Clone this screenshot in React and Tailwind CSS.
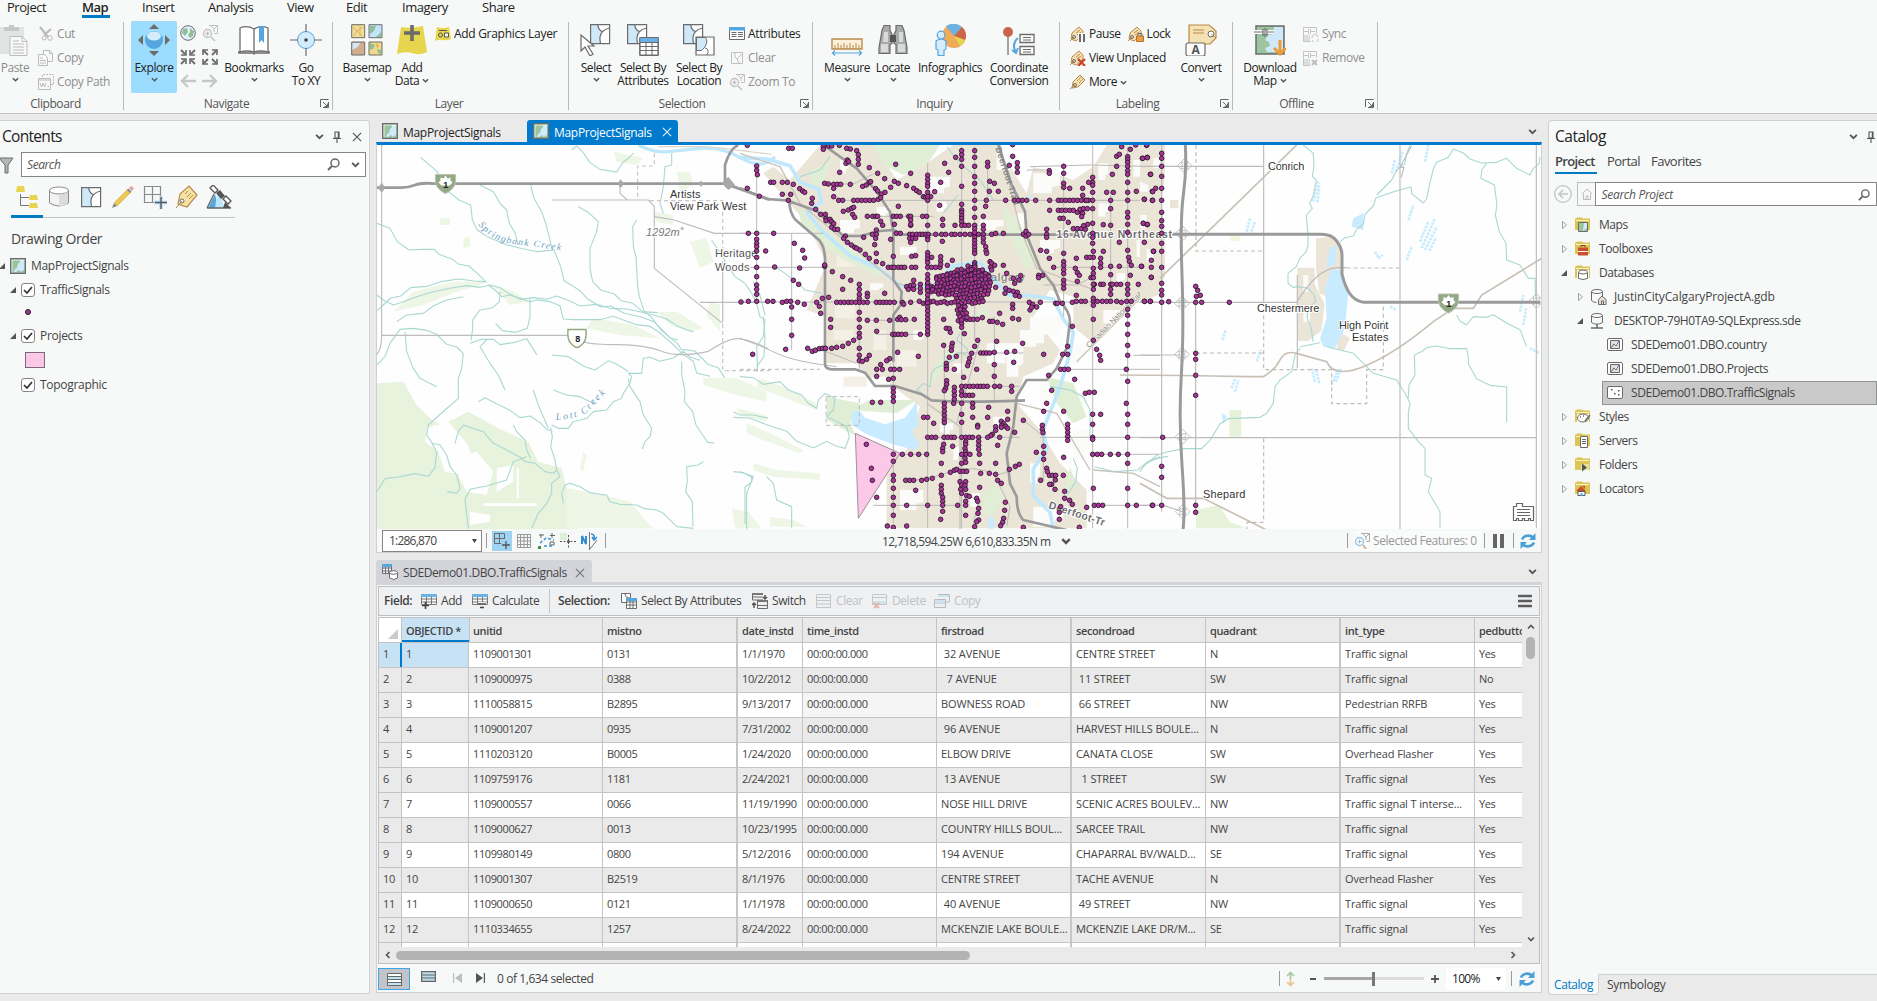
import React from "react";

const G = "#6b6b6b";

/* ---------- small building blocks ---------- */
function Svg({ w = 16, h = w, vb, className = "", children }) {
  return (
    <svg width={w} height={h} viewBox={vb || `0 0 ${w} ${h}`} fill="none" className={"block shrink-0 " + className}>
      {children}
    </svg>
  );
}
const Chev = ({ s = 7, c = "#555", r = "", w = 1.6 }) => (
  <Svg w={s} h={s} vb="0 0 8 8" className={r}>
    <path d="M1 2.5l3 3 3-3" stroke={c} strokeWidth={w} />
  </Svg>
);
const XIcon = ({ s = 11, c = "#555" }) => (
  <Svg w={s} vb="0 0 11 11"><path d="M1 1l9 9M10 1l-9 9" stroke={c} strokeWidth="1.3" /></Svg>
);
const Pin = () => (
  <Svg w={8} h={12}><path d="M2 1h4v6H2zM0 7.5h8M4 8v4M5.3 1v6" stroke="#555" strokeWidth="1.1" /></Svg>
);
const Mag = ({ s = 13 }) => (
  <Svg w={s} vb="0 0 13 13"><circle cx="8" cy="5" r="4" stroke="#666" strokeWidth="1.5" /><path d="M5 8L1 12" stroke="#666" strokeWidth="2" /></Svg>
);
const Launcher = () => (
  <Svg w={9}><path d="M.5 8V.5H8.500M8.500 3v5.500H3M3 3l4.500 4.500M7.500 4.500v3h-3" stroke="#666" /></Svg>
);
const MapIcon = () => (
  <Svg w={16}><path fill="#9bc49f" d="M1 1h14v14H1z" /><path fill="#cfeafc" d="M10 2h4v10l-2 1-1 1-2-2-3 2H4l1-3 2-1 1-4 2-2z" /><path fill="#fff" d="M1.500 1.500h13v1h-12v12h-1z" opacity=".7" /><path stroke={G} strokeWidth="1.200" d="M.6.6h14.800v14.800H.6z" /></Svg>
);
const Refresh = ({ s = 16 }) => (
  <Svg w={s} vb="0 0 16 16"><path d="M2 6.500C4 2 10 1.500 13 4.500M14 9.500C12 14 6 14.500 3 11.500" stroke="#4a9fd8" strokeWidth="2.600" /><path d="M15.500 0v7H9zM.5 16V9H7z" fill="#4a9fd8" /></Svg>
);

/* ---------- ribbon icons ---------- */
const icons = {
  paste: (
    <Svg w={32}><path fill="#e2e4e4" d="M1 3h24v27H1z" /><path fill="#c6c8c8" d="M5 3h5V1h5v2h5v4H5z" /><path fill="#f7f9f8" stroke="#bbb" d="M11 12.500h12l5 5v14H11z" /><path stroke="#bbb" d="M23 12.500v5h5M14 17h6M14 20h11M14 23h11M14 26h11M14 29h11" /></Svg>
  ),
  cut: <Svg><path d="M2 1l8 10M13 3L6 9" stroke="#bbb" strokeWidth="2.200" /><circle cx="6" cy="12" r="2" stroke="#bbb" /><circle cx="12" cy="12" r="2.300" stroke="#bbb" /></Svg>,
  copy: <Svg><path d="M5.500.5h6l3 3v8h-9z M11.500.5v3h3" stroke="#bbb" /><path fill="#f7f9f8" stroke="#bbb" d="M.5 4.500h6l3 3v8h-9z" /><path stroke="#bbb" d="M2 8h3M2 10.500h6M2 13h6" /></Svg>,
  path: <Svg><path d="M4.500 3V.5h11v10H13" stroke="#bbb" strokeDasharray="2 1" /><path d="M.5 4.500h12v11H.5zM.5 6h12" stroke="#bbb" /><path d="M2 9l1.500 4L5 9l1.500 4L8 9M9.500 12.500h1.500" stroke="#bbb" /></Svg>,
  explore: (
    <Svg w={32}><path fill={G} d="M16 0l5 5H11zM16 32l5-5H11zM0 16l5-5v10zM32 16l-5-5v10z" /><circle cx="16" cy="16" r="9" fill="#55a6dc" /><ellipse cx="16" cy="12" rx="7" ry="4.500" fill="#d4ecfb" /></Svg>
  ),
  globe: <Svg><circle cx="8" cy="8" r="7.300" fill="#e3f3fd" stroke={G} /><path fill="#8fbf94" d="M3 4l4-1 1 4-3 4-3-3zM10 3l4 3-1 5-3 2-2-3 2-3z" /></Svg>,
  zoomsel: <Svg><path d="M7 .5h8.500v8H12M9 1l3 3 3-3M12 4v3" stroke="#c0c0c0" /><circle cx="5.500" cy="8.500" r="4" stroke="#c0c0c0" strokeWidth="1.300" /><path d="M9 12l4 4M3.500 8.500h4M5.500 6.500v4" stroke="#c0c0c0" strokeWidth="1.500" /></Svg>,
  inn: <Svg><path d="M1 1l4 4M15 1l-4 4M1 15l4-4M15 15l-4-4" stroke={G} strokeWidth="1.800" /><path d="M6 1v5H1M10 1v5h5M6 15v-5H1M10 15v-5h5" stroke={G} strokeWidth="1.600" /></Svg>,
  out: <Svg><path d="M1 1l5 5M15 1l-5 5M1 15l5-5M15 15l-5-5" stroke={G} strokeWidth="1.800" /><path d="M1 6V1h5M15 6V1h-5M1 10v5h5M15 10v5h-5" stroke={G} strokeWidth="1.600" /></Svg>,
  left: <Svg><path d="M16 8H2M8 2L2 8l6 6" stroke="#c6c8c8" strokeWidth="2.300" /></Svg>,
  right: <Svg><path d="M0 8h14M8 2l6 6-6 6" stroke="#c6c8c8" strokeWidth="2.300" /></Svg>,
  book: (
    <Svg w={32}><path fill="#fff" stroke={G} strokeWidth="1.300" d="M2 28V4q7-3 14 1 7-4 14-1v24q-7-2-14 0-7-2-14 0zM16 5v23" /><path d="M1 27v2h14l1 1 1-1h14v-2" stroke={G} strokeWidth="1.500" /><path fill="#55a6dc" d="M21 2h5v17l-2.500-3-2.500 3z" /></Svg>
  ),
  goto: <Svg w={32}><circle cx="16" cy="16" r="8.500" fill="#d4ecfb" stroke="#55a6dc" /><path d="M16 0v8M16 24v8M0 16h8M24 16h8" stroke={G} strokeWidth="1.200" /><circle cx="16" cy="16" r="1.800" fill="#444" /></Svg>,
  basemap: (
    <Svg w={32}>
      <path fill="#f0dd98" stroke={G} d="M.7.7h13v13H.7z" /><path stroke="#dba45e" strokeWidth=".8" d="M2 3l4 4 6-4M3 12l3-5 5 5M9 2v10" />
      <path fill="#bfe4fb" stroke={G} d="M18 .7h13v13H18z" /><path fill="#8fbf94" d="M19 2h6l-2 5-4 3zM30 8v5h-5z" />
      <path fill="#d3ad8b" stroke={G} d="M.7 18h13v13H.7z" /><path fill="#cfe9fa" d="M1.500 19h8l-3 4-5 3z" />
      <path fill="#f2d98a" stroke={G} d="M18 18h13v13H18z" /><path fill="#8fbf94" d="M19 19l5 2-2 4-3 1zM26 25l4 1v4l-3-1z" /><path fill="#e8a04e" d="M25 19l3 3-2 2z" />
    </Svg>
  ),
  add: <Svg w={32}><path fill="#e7d54e" d="M5 3q10 2 22-1l4 26q-8 4-15 1-8-2-15 1z" /><path d="M16 1v16M8 9h16" stroke={G} strokeWidth="3.600" /></Svg>,
  gfx: <Svg><path fill="#e7d54e" d="M2 1q6 2 12 0l2 12q-4 2-8 1-4-1-8 1z" /><path stroke="#555" d="M4 4.500h8" /><circle cx="5.500" cy="9" r="2" stroke="#555" /><path stroke="#555" fill="#fff" d="M9.500 7h4v4h-4z" /></Svg>,
  select: <Svg w={32}><Poly x={10} y={0} /><path fill="#fff" stroke={G} strokeWidth="1.200" d="M1 11v16l4-4 5 9 3-2-5-8h6z" /></Svg>,
  sba: <Svg w={32}><Poly x={0} y={0} /><path fill="#fff" stroke={G} d="M13 14h18v17H13z" /><path fill="#6bb2e4" d="M13 13.500h18V18H13z" /><path stroke={G} d="M13 18.500h18M13 22.500h18M13 26.500h18M19 18v13M25 18v13M12.700 13.500h18.600v18H12.700z" /></Svg>,
  sbl: <Svg w={32}><Poly x={0} y={0} /><path fill="#fff" stroke={G} strokeWidth="1.200" d="M13 13h18v18H13z" /><path fill="#cfe9fa" stroke={G} d="M13.500 13.500h9q3 4-1 10l-3 3h-5z" /><path stroke={G} d="M22 24q5 1 2 7" /></Svg>,
  attrs: <Svg><path fill="#fff" stroke={G} d="M.5 1.500h15v12H.5z" /><path fill="#55a6dc" d="M0 1h16v3.500H0z" /><path stroke={G} d="M2.500 6.500h5M2.500 8.500h5M2.500 10.500h5M9 6.500h5M9 8.500h5M9 10.500h5" /></Svg>,
  clear: <Svg><path stroke="#c0c0c0" d="M2.500 2.500h11v11h-11zM6 3q-1 5 2 6l2 4M8 9l5-5" /></Svg>,
  measure: <Svg w={32}><path fill="#fbf0d9" stroke="#b98a4a" strokeWidth="1.400" d="M1 15h30v10H1z" /><path d="M4 25v-4M7 25v-6M10 25v-4M13 25v-6M16 25v-4M19 25v-6M22 25v-4M25 25v-6M28 25v-4" stroke="#b98a4a" /><path d="M2 29h28M4 26.500L1.500 29 4 31.500M28 26.500L30.500 29 28 31.500" stroke="#55a6dc" strokeWidth="1.200" /></Svg>,
  locate: <Svg w={32}><path fill="#a9abab" stroke={G} strokeWidth="1.200" d="M7 1.500h6v5l2 4v9l-2 1v9H2v-6l3-17zM25 1.500h-6v5l-2 4v9l2 1v9h11v-6L27 6.500z" /><path fill="#d9dada" d="M4 20h7v8H4zM21 20h7v8h-7zM7 8h4v10H6zM22 8h4v10h-4z" /><path fill="#555" d="M13 11h6v7h-6z" /></Svg>,
  info: <Svg w={32}><circle cx="20" cy="12" r="12" fill="#efaa5a" /><path fill="#6bb2e4" d="M20 12L12 2q8-5 16 1z" /><path fill="#c9654a" d="M20 12l8-9q6 6 3 13z" /><path fill="#e7d54e" d="M20 12l11 4q-2 5-5 6z" /><g fill="#d4ecfb" stroke="#55a6dc" strokeWidth="1.200"><path d="M2 17q5-4 10 0v8l-2 1v5.500H4V26l-2-1z" /><circle cx="7" cy="11" r="3.800" /></g></Svg>,
  coord: <Svg w={32}><circle cx="5" cy="8" r="5" fill="#c9654a" /><path d="M5 12v19" stroke={G} strokeWidth="1.200" /><path d="M15 14q-7 6-2 14M9 26l4 3 2-5" stroke="#55a6dc" strokeWidth="2" /><path fill="#fff" stroke={G} strokeWidth="1.300" d="M17 10.500h14v8H17zM17 22.500h14v8H17z" /><path stroke={G} d="M20 13.500h8M20 16h8M20 25.500h8M20 28h8" /></Svg>,
  tag: <Tag />,
  pause: <Svg><TagP /><path fill="#f7f9f8" d="M8 7h8v9H8z" /><path stroke={G} strokeWidth="2" d="M10 8v8M14 8v8" /></Svg>,
  lock: <Svg><TagP /><path fill="#e9a04a" stroke="#b9722a" d="M8.500 10h7v5.500h-7z" /><path stroke={G} d="M10 10V7.500h4V10" /></Svg>,
  unpl: <Svg><TagP /><path stroke="#c9452a" strokeWidth="2.300" d="M8 9l7 7M15 9l-7 7" /></Svg>,
  convert: <Svg w={32}><path fill="#f5e2b4" stroke="#b98a4a" strokeWidth="1.200" d="M4 1h20l7 6v7l-6 6H4z" /><circle cx="26" cy="10" r="3" stroke={G} fill="#fff" /><path stroke="#b98a4a" d="M8 6h11M8 9h11M26 10l5 4" /><rect x="1" y="19" width="19" height="13" rx="2" fill="#fff" stroke={G} strokeWidth="1.200" /><text x="10.500" y="30" fontSize="12" fontWeight="700" fontFamily="Open Sans, sans-serif" textAnchor="middle" fill="#555">A</text></Svg>,
  download: <Svg w={32}><path fill="#9bc49f" stroke={G} strokeWidth="1.500" d="M2 2h28v28H2z" /><path fill="#cfe9fa" d="M20 3h9v22l-4 3H13l-2-4 5-2-1-4-4-2 3-5 6-1z" /><path stroke="#fff" strokeWidth="4" d="M0 8h20" /><path stroke={G} strokeWidth="1.200" d="M0 8h9M14 8h6M9 5v7M11 4v9M13 5v7" /><path stroke="#eb9c3c" strokeWidth="3" d="M26 16v14M20 24l6 6 6-6" /></Svg>,
  sync: <Svg><path stroke="#c4c4c4" d="M.5 1.500h13v6M.5 1.500v14h7M1 5.500h4M8 5.500h4M5.500 3v5M7.500 3v5M9 12a3 3 0 016-1M15 13a3 3 0 01-6 1" /><path fill="#dedede" d="M1 9h6v6H1z" /></Svg>,
  remove: <Svg><path stroke="#c4c4c4" d="M.5 1.500h13v6M.5 1.500v14h7M1 5.500h4M8 5.500h4M5.500 3v5M7.500 3v5" /><path fill="#dedede" d="M1 9h6v6H1z" /><path stroke="#bdbdbd" strokeWidth="2" d="M9 10l5 5M14 10l-5 5" /></Svg>,
};
function Poly({ x, y }) {
  return (
    <g transform={`translate(${x} ${y})`}>
      <path fill="#fff" d="M.6.6h19v19H.6z" />
      <path fill="#cfe9fa" d="M.6.6h7q1 5 5 7-4 4-2 12h-10z" />
      <path stroke={G} strokeWidth="1.200" d="M.6.6h19v19H.6zM7.600.6q1 6 5 7-4 4-2 12M12.600 7.600Q15 5 19.600 4" />
    </g>
  );
}
function TagP() {
  return <><path fill="#f5e2b4" stroke="#b98a4a" d="M1 13l1-6 7-6 4 4v4l-7 6z" /><circle cx="4" cy="11" r="1.500" stroke={G} /><path stroke="#b98a4a" d="M6 7l4-3M7 9l4-3M0 15l4-4" /></>;
}
function Tag() {
  return <Svg><g><path fill="#f5e2b4" stroke="#b98a4a" d="M2 14l1-6 7-7 5 5-7 7z" /><circle cx="5" cy="11" r="1.500" stroke={G} /><path stroke="#b98a4a" d="M7 7l4-4M9 9l4-4M0 15l5-4" /></g></Svg>;
}

function Big({ cls, icon, a, b, chev, gray, bg = "" }) {
  return (
    <div className={"flex h-[72px] shrink-0 flex-col items-center whitespace-nowrap pt-[3px] " + cls + " " + bg + (gray ? " text-[#8b8b8b]" : "")}>
      {icons[icon]}
      <div className="mt-[5px] leading-[13px]">{a}</div>
      {b ? (
        <div className="flex items-center gap-[3px] leading-[13px]">{b}{chev && <Chev />}</div>
      ) : chev ? (
        <div className="flex h-[11px] items-center"><Chev /></div>
      ) : null}
    </div>
  );
}
function Small({ icon, t, gray, chev }) {
  return (
    <div className={"flex h-6 items-center gap-[3px] whitespace-nowrap " + (gray ? "text-[#8f8f8f]" : "")}>
      {icons[icon]}<span>{t}</span>{chev && <Chev />}
    </div>
  );
}
function Group({ cls, label, shift = "", launch, children }) {
  return (
    <div className={"flex h-[88px] shrink-0 flex-col border-r border-[#b9bbbb] " + cls}>
      <div className="-mt-px flex h-[77px]">{children}</div>
      <div className="flex items-center justify-between text-[#555]">
        <span className="w-[9px]" />
        <span className={"pt-px leading-[13px] " + shift}>{label}</span>
        <span className="mr-[3px] w-[9px]">{launch && <Launcher />}</span>
      </div>
    </div>
  );
}

function Ribbon() {
  return (
    <div className="h-[114px] shrink-0 border-b border-[#c3c5c5] bg-[#f7f9f8]">
      <div className="flex h-[22px] pl-[7px] text-[13px] leading-[14px] tracking-[-0.035em]">
        <span className="w-[76px]">Project</span>
        <span className="w-[59px] font-semibold"><span className="-ml-px block h-[18px] w-[28px] border-b-[3px] border-[#007ac2]">Map</span></span>
        <span className="w-[66px]">Insert</span>
        <span className="w-[79px]">Analysis</span>
        <span className="w-[59px]">View</span>
        <span className="w-[56px]">Edit</span>
        <span className="w-[80px]">Imagery</span>
        <span>Share</span>
      </div>
      <div className="flex">
        <Group cls="w-[124px]" label="Clipboard" shift="-ml-[9px]">
          <Big cls="w-[30px]" icon="paste" a="Paste" chev gray />
          <div className="ml-2 mt-px"><Small icon="cut" t="Cut" gray /><Small icon="copy" t="Copy" gray /><Small icon="path" t="Copy Path" gray /></div>
        </Group>
        <Group cls="w-[209px]" label="Navigate" launch>
          <Big cls="ml-[7px] w-[46px]" icon="explore" a="Explore" chev bg="rounded-[2px] bg-[#9bdcff]" />
          <div className="ml-[3px] mt-[4px] grid h-[64px] grid-cols-2 content-between gap-x-[6px]">
            {icons.globe}{icons.zoomsel}{icons.inn}{icons.out}{icons.left}{icons.right}
          </div>
          <Big cls="ml-[6px] w-[60px]" icon="book" a="Bookmarks" chev />
          <Big cls="ml-[2px] w-[40px]" icon="goto" a="Go" b="To XY" />
        </Group>
        <Group cls="w-[236px]" label="Layer">
          <Big cls="ml-[9px] w-[50px]" icon="basemap" a="Basemap" chev />
          <Big cls="ml-[3px] w-[34px]" icon="add" a="Add" b="Data" chev />
          <div className="ml-[6px] mt-px tracking-[-0.025em]"><Small icon="gfx" t="Add Graphics Layer" /></div>
        </Group>
        <Group cls="w-[244px]" label="Selection" shift="-ml-[14px]" launch>
          <Big cls="ml-[10px] w-[34px]" icon="select" a="Select" chev />
          <Big cls="ml-[3px] w-[54px]" icon="sba" a="Select By" b="Attributes" />
          <Big cls="ml-[4px] w-[50px]" icon="sbl" a="Select By" b="Location" />
          <div className="ml-[5px] mt-px tracking-[-0.025em]"><Small icon="attrs" t="Attributes" /><Small icon="clear" t="Clear" gray /><Small icon="zoomsel" t="Zoom To" gray /></div>
        </Group>
        <Group cls="w-[247px]" label="Inquiry">
          <Big cls="ml-[14px] w-[40px]" icon="measure" a="Measure" chev />
          <Big cls="ml-[9px] w-[34px]" icon="locate" a="Locate" chev />
          <Big cls="ml-[6px] w-[68px]" icon="info" a="Infographics" chev />
          <Big cls="ml-[5px] w-[60px]" icon="coord" a="Coordinate" b="Conversion" />
        </Group>
        <Group cls="w-[173px]" label="Labeling" launch shift="-ml-[14px]">
          <div className="ml-[10px] mt-px w-[109px] shrink-0">
            <div className="flex gap-[7px]"><Small icon="pause" t="Pause" /><Small icon="lock" t="Lock" /></div>
            <Small icon="unpl" t="View Unplaced" /><Small icon="tag" t="More" chev />
          </div>
          <Big cls="w-[44px]" icon="convert" a="Convert" chev />
        </Group>
        <Group cls="w-[145px]" label="Offline" shift="-ml-[14px]" launch>
          <Big cls="ml-[9px] w-[56px]" icon="download" a="Download" b="Map" chev />
          <div className="ml-[5px] mt-px"><Small icon="sync" t="Sync" gray /><Small icon="remove" t="Remove" gray /></div>
        </Group>
      </div>
    </div>
  );
}

/* ---------- contents pane ---------- */
const Exp = () => <Svg w={6}><path d="M6 0v6H0z" fill="#555" /></Svg>;
const Check = () => (
  <span className="flex size-[14px] items-center justify-center rounded-[3px] border border-[#858585] bg-white">
    <Svg w={10} h={8}><path d="M1 4l3 3 5-6" stroke="#333" strokeWidth="1.700" /></Svg>
  </span>
);
function Contents() {
  return (
    <div className="flex h-[874px] w-[370px] shrink-0 flex-col rounded-tr-[4px] border-r border-t border-b border-[#cfd1d1] bg-[#f7f9f8]">
      <div className="flex h-[31px] items-center pl-[2px] text-[15.5px] tracking-[-0.045em] text-[#222]">
        <span className="flex-1">Contents</span>
        <div className="flex items-center pr-[7px]"><Chev s={9} /><span className="ml-[9px]"><Pin /></span><span className="ml-[11px]"><XIcon s={10} /></span></div>
      </div>
      <div className="flex items-center">
        <Svg w={14} h={18}><path fill="#b5b7b7" stroke={G} d="M-1 2h14L8 9v8H5V9z" /></Svg>
        <div className="ml-[7px] flex h-[25px] w-[345px] items-center border border-[#868686] bg-white pl-[5px] pr-[5px] italic text-[#555]">
          <span className="flex-1">Search</span><Mag /><span className="ml-[11px]"><Chev s={9} /></span>
        </div>
      </div>
      <div className="ml-[11px] mt-[2px] flex h-[39px] w-[224px] items-center border-b border-[#c4c6c6]">
        <div className="mt-px flex h-[38px] w-[32px] items-center justify-center border-b-[3px] border-[#007ac2]">
          <Svg w={24}><path fill="#e7d54e" d="M2 1h7l1 6H1zM15 10h7l1 5h-9zM15 18h7l1 5h-9z" /><path d="M5.500 9v11.500H14M5.500 12.500H14" stroke="#777" /></Svg>
        </div>
        <Svg w={24} className="-mt-[2px] ml-[4px]"><path fill="#f1f2f2" stroke="#8a8a8a" d="M2.500 5v13q9.500 6 19 0V5" /><ellipse cx="12" cy="5.500" rx="9.500" ry="3.500" fill="#fff" stroke="#8a8a8a" /><path fill="#dcdcdc" d="M12 9.500q6 0 9-3v11q-3 4-9 4z" /></Svg>
        <Svg w={22} className="-mt-[2px] ml-[9px]"><Poly x={1} y={1} /></Svg>
        <Svg w={24} className="-mt-[2px] ml-[8px]"><path fill="#ecc94f" stroke="#c9a43c" strokeWidth=".6" d="M4 18L18 4l3 3L7 21z" /><path fill="#888" d="M4 18l3 3-5 2zM17 5l3 3 1.500-1.500-3-3z" /><path fill="#e9a09a" d="M19 3l2-2 3 2-2 3z" /></Svg>
        <Svg w={24} className="-mt-[2px] ml-[9px]"><path stroke="#8a8a8a" strokeWidth="1.200" d="M1.500 1.500h16v16h-16zM9.500 1.500v16M1.500 9.500h16" /><path stroke="#bfe4fb" strokeWidth="4" d="M18 11v13M11 17.500h13" /><path stroke="#555" strokeWidth="1.400" d="M18 12v12M12 17.500h12" /></Svg>
        <Svg w={24} className="-mt-[2px] ml-[8px]"><path fill="#f5e2a4" stroke="#b98a4a" strokeWidth="1.200" d="M3 19l2-10 9-8 8 9-10 12z" /><circle cx="7" cy="16" r="2" fill="#fff" stroke={G} /><path stroke="#b98a4a" d="M10 9l3-3M12 12l4-4M14 14l4-4M1 23l6-7" /></Svg>
        <Svg w={26} h={24} className="-mt-[2px] ml-[7px]"><path fill="#55a6dc" d="M9 9L2 23h10z" /><path fill="#bfe4fb" d="M11 9h4l3 14h-9z" /><path stroke="#666" strokeWidth="1.300" d="M1 23h24M8 9L1 23" /><path fill="#555" d="M10 8l4-3 5 6-4 3zM19 17l6 6h-8z" /><path stroke="#555" strokeWidth="1.300" fill="#fff" d="M4 3l3-3 5 5-3 3zM17 14l3-3 5 5-3 3z" /></Svg>
      </div>
      <div className="ml-[11px] mt-[10px] h-[24px] text-[14px] leading-[22px] tracking-[-0.03em] text-[#444]">Drawing Order</div>
      <div className="mt-[2px] tracking-[-0.025em] text-[#444]">
        <div className="flex h-6 items-center"><span className="-ml-px mr-[5px]"><Exp /></span><MapIcon /><span className="ml-[5px]">MapProjectSignals</span></div>
        <div className="flex h-6 items-center pl-[10px]"><Exp /><span className="ml-[5px] mr-[5px]"><Check /></span>TrafficSignals</div>
        <div className="flex h-[22px] pl-[25px] pt-[7px]"><span className="size-[6px] rounded-full border border-[#1c1c1c] bg-[#a53294]" /></div>
        <div className="flex h-6 items-center pl-[10px]"><Exp /><span className="ml-[5px] mr-[5px]"><Check /></span>Projects</div>
        <div className="flex h-[25px] pl-[25px] pt-[4px]"><span className="h-[16px] w-[20px] border border-[#7a6a74] bg-[#fcc8e8]" /></div>
        <div className="flex h-6 items-center pl-[21px]"><span className="mr-[5px]"><Check /></span>Topographic</div>
      </div>
    </div>
  );
}

/* ---------- map ---------- */
// Flat x,y lists measured on a canvas three times the map's scale.
const CITY = [
  22,46,146,55,157,55,50,108,50,121,52,134,92,157,101,157,127,157,142,157,160,163,179,176,188,183,194,187,152,193,127,193,145,211,217,205,215,220,227,238,22,175,58,199,
  25,310,50,310,101,310,50,328,50,340,50,350,50,363,50,382,50,412,50,440,50,465,50,478,50,493,50,514,3,516,25,514,83,514,99,514,127,517,140,514,152,514,173,517,193,523,230,517,
  77,363,104,411,163,340,188,361,194,384,179,414,160,451,176,463,155,531,155,568,155,616,137,658,38,673,
  250,50,250,58,266,48,275,48,298,46,320,55,331,57,350,62,355,74,355,88,355,103,322,90,318,100,326,95,388,113,413,130,299,127,434,146,467,103,512,130,475,229,
  254,160,265,162,281,163,292,163,302,163,331,163,368,169,379,165,388,157,392,155,407,176,413,183,424,192,435,187,452,172,463,154,475,160,281,175,281,200,
  296,211,308,211,341,211,353,211,365,211,377,211,389,211,401,211,415,208,422,203,500,167,521,175,530,182,538,187,550,200,557,202,572,200,584,185,602,157,614,100,626,127,647,82,599,226,
  563,136,563,148,563,160,563,169,563,187,563,200,563,211,665,62,665,74,665,88,665,109,665,169,665,223,665,240,665,247,665,257,665,265,665,275,
  704,62,704,82,704,109,704,140,704,160,704,184,704,211,704,235,704,262,743,97,743,109,749,154,763,160,748,184,775,184,739,211,737,229,730,259,
  818,79,808,106,832,98,832,112,832,127,818,44,797,211,823,211,835,211,847,211,860,211,887,211,929,211,955,211,965,211,977,211,989,211,1000,211,1012,211,1024,211,1036,211,1046,211,
  928,122,928,130,971,109,971,130,971,160,971,172,989,175,929,241,955,241,965,241,977,241,989,241,1000,241,1012,247,1024,247,1020,238,1030,236,1042,236,960,265,970,265,985,277,1028,250,1025,260,
  1058,142,1058,157,1058,166,1058,187,1058,211,1058,236,1058,280,1058,310,1058,322,1058,340,1060,364,1060,382,1046,157,1028,175,1028,196,1040,211,1000,296,1012,296,1024,296,1036,298,1043,283,1031,287,
  1100,187,1120,187,1117,133,1130,109,1130,79,1138,73,1145,50,1112,211,1112,236,1090,284,1112,286,1090,364,1138,337,1171,58,1187,45,1220,46,1207,85,1222,82,1231,133,1189,184,1237,184,1213,208,1237,211,1210,280,1222,284,1241,364,
  1163,80,1163,88,1163,97,1163,109,1163,122,1163,133,1163,157,1163,187,1163,211,1163,247,1163,262,1163,283,1163,307,1163,361,1166,382,1168,394,1174,406,1171,436,1163,463,1163,478,1163,493,1163,538,1163,556,1163,583,1163,613,1163,646,1163,676,1159,718,1163,754,1159,820,1163,853,1163,883,1163,922,1163,973,1163,1000,1163,1075,1163,1126,
  1138,409,1112,409,1205,409,1234,442,1195,463,1112,434,1112,463,1117,463,1130,463,1142,463,1063,463,1082,463,1090,463,1112,478,1112,493,1112,514,
  997,517,1009,514,1024,514,1036,514,1060,514,1072,514,1087,514,1100,514,1130,514,1144,517,1160,514,1174,514,1214,514,1231,514,
  469,310,481,310,509,313,518,313,530,313,540,313,548,313,557,313,565,313,587,313,605,313,617,313,635,313,645,313,660,313,675,313,690,313,704,313,716,313,730,313,755,313,767,310,790,310,850,313,858,304,858,318,866,313,920,298,920,313,920,322,
  512,286,563,286,608,286,645,286,665,286,675,286,686,286,382,259,398,259,407,259,413,259,460,259,470,259,481,259,506,259,512,259,512,270,512,283,548,259,560,259,608,268,
  463,283,371,322,452,328,409,300,409,313,407,325,404,344,428,286,422,274,397,313,310,244,325,240,335,235,341,232,338,253,344,262,242,253,256,253,258,265,258,272,270,268,275,275,281,281,275,292,284,298,293,298,
  316,318,311,325,322,337,334,345,344,352,350,355,360,360,376,373,388,385,409,395,428,401,445,412,455,412,463,412,475,412,485,412,494,412,515,412,527,412,563,412,575,412,587,412,600,412,409,370,460,379,515,379,527,377,
  563,322,563,329,563,368,563,378,563,388,563,398,563,434,575,382,602,380,602,392,602,403,607,334,622,406,637,391,509,325,518,325,527,325,512,337,
  704,286,704,296,704,307,704,322,704,332,704,342,704,352,704,362,704,370,730,286,730,298,730,325,730,337,737,350,738,362,740,370,
  254,409,254,405,277,425,308,440,332,451,308,478,358,463,358,478,358,493,358,505,358,517,358,547,358,568,358,592,358,610,358,622,358,655,358,676,358,692,382,490,382,500,382,571,434,490,409,571,449,571,
  290,517,302,517,313,517,325,517,335,517,347,517,370,517,382,517,409,517,420,517,430,517,440,517,450,517,463,517,487,517,491,523,512,517,538,514,266,502,247,505,238,529,242,550,272,568,272,592,410,604,
  458,613,466,613,475,613,485,613,497,613,541,613,563,613,473,568,479,562,484,569,497,569,523,568,203,655,217,664,226,661,238,656,248,655,257,655,275,655,290,652,308,649,325,640,341,631,
  367,694,380,688,388,676,473,667,449,686,440,692,422,704,410,718,427,718,452,718,463,718,479,718,410,739,446,748,460,745,460,775,460,787,460,800,460,814,397,817,422,817,535,679,
  750,395,755,400,764,406,790,406,752,412,755,420,745,435,767,472,704,398,704,405,500,470,512,466,521,451,521,466,505,478,521,478,541,463,541,475,541,487,563,463,563,475,575,470,575,485,
  800,430,820,445,842,437,837,450,824,460,797,475,808,481,820,484,832,487,838,499,795,490,826,496,818,523,818,535,818,565,836,568,868,517,878,523,890,531,901,517,870,540,875,532,947,520,952,520,967,520,896,436,908,436,896,443,
  779,550,611,568,680,568,690,568,700,568,712,568,727,563,749,574,758,574,772,577,788,583,619,595,628,596,631,607,665,580,665,592,673,611,
  611,646,637,640,635,650,634,661,628,682,649,679,713,631,704,649,695,670,689,685,686,697,683,707,722,669,731,669,740,669,749,669,763,667,800,667,824,664,848,640,770,634,821,697,911,673,763,704,763,739,
  619,700,619,710,619,718,620,752,620,763,617,775,613,782,643,718,710,718,671,742,665,769,677,769,689,769,700,769,712,769,722,769,731,769,742,769,764,769,779,769,815,769,815,784,
  643,772,643,784,643,796,643,808,641,820,665,784,665,796,677,796,688,796,698,796,665,820,698,820,698,832,613,820,613,832,613,844,613,856,613,868,613,878,665,853,665,877,698,862,743,862,746,832,713,886,713,891,
  803,844,803,868,850,871,824,907,784,874,791,880,785,886,767,890,767,901,784,892,797,889,803,895,779,922,773,946,757,913,752,917,743,922,551,862,563,862,581,880,
  563,922,575,922,587,922,612,922,623,922,634,922,643,922,665,922,677,922,688,922,698,922,716,922,611,943,608,955,608,965,638,949,604,1000,677,935,677,943,675,955,677,965,677,973,716,934,716,946,716,958,718,973,
  460,973,487,973,512,973,536,973,560,973,665,973,690,973,460,994,665,1000,675,985,677,997,460,1036,460,1051,460,1075,460,1102,460,1126,460,1156,460,1192,442,1188,500,1188,497,1051,509,1051,521,1051,545,1051,560,1048,577,1045,604,1036,527,1081,
  631,1027,643,1021,650,1018,660,1024,670,1024,680,1024,719,1000,767,1000,722,1030,748,1030,767,1033,773,1051,784,1060,808,1018,826,1009,838,1003,604,1066,604,1078,604,1090,608,1102,608,1114,608,1126,608,1144,602,1168,
  660,1055,665,1065,662,1078,665,1090,677,1055,675,1066,677,1078,680,1097,688,1099,710,1105,713,1114,677,1114,677,1126,653,1126,677,1156,716,1135,714,1150,716,1170,710,1175,704,1190,719,1072,796,1117,794,1141,791,1165,788,1177,782,1187,850,1192,563,1126,500,1126,
  926,736,935,781,920,820,911,844,971,844,983,649,968,673,983,673,962,718,973,718,985,718,1004,748,997,589,902,361,920,364,928,385,941,412,971,370,971,395,971,406,971,419,971,431,971,451,971,463,971,475,
  1009,385,1040,382,1050,382,1006,415,1012,428,1018,436,1012,454,1009,496,1060,415,1060,430,1053,443,1060,443,1060,463,1060,478,1060,505,1060,526,1060,568,1060,631,1082,385,1082,400,1082,412,1070,658,1079,676,1082,691,
  1036,790,1048,787,1063,787,1058,853,1082,853,1058,883,1058,922,1058,928,983,883,983,895,983,907,983,919,983,931,907,886,907,898,909,908,911,949,889,967,911,970,911,988,971,982,
  920,1015,922,1025,928,1036,937,1036,947,1036,970,1036,946,1050,935,1063,929,1063,945,1078,974,1084,974,1105,989,1111,997,1123,962,1130,958,1147,958,1168,902,1051,1018,1192,1040,1132,
  1058,973,1072,973,1085,973,1111,973,1135,973,1060,1075,1063,1126,1075,1126,1088,1126,1189,1126,1237,1126,379,943,394,1015,397,1051,410,1102,
];
const EAST = [
  20,90,8,130,22,128,65,115,65,130,65,154,65,184,65,220,65,256,65,292,65,317,65,334,65,355,65,385,65,409,65,457,65,505,65,526,65,540,65,562,86,560,13,559,31,559,
  32,178,47,220,38,230,38,256,13,253,10,325,22,328,13,382,40,409,34,436,34,457,4,454,34,487,68,967,65,1054,65,1087,65,1171,38,1171,
  167,514,173,526,181,541,169,544,167,562,185,562,268,562,167,715,167,733,167,781,167,841,167,1171,167,1192,
];
// Dense downtown blocks: [y, from, to]
const DOWNTOWN = [[411,684,714],[421,650,728],[431,618,740],[438,590,752],[449,588,752],[460,588,752],[471,580,750],[482,576,748],[493,592,745],[505,650,726],[517,548,728],[529,652,672],[540,652,680],[551,654,680],[562,656,680],[573,655,672]];
function dots(list) {
  const o = [];
  for (let i = 0; i < list.length; i += 2) o.push(<circle key={i} cx={list[i]} cy={list[i + 1]} r="6.900" />);
  return o;
}
function downtown() {
  const o = [];
  DOWNTOWN.forEach(([y, a, b], r) => {
    for (let x = a, k = 0; x <= b; x += 9 + ((k * 7 + r * 3) % 4), k++) {
      o.push(<circle key={r + "-" + x} cx={x + (r % 3) * 2} cy={y + ((k * 5 + r * 2) % 7) - 3} r="6.900" />);
    }
  });
  for (let y = 447; y < 612; y += 12) o.push(<circle key={"c" + y} cx="563" cy={y} r="6.900" />);
  return o;
}
function Interchange({ x, y }) {
  return <path d={`M${x - 22} ${y}l22-22 22 22-22 22zM${x - 10} ${y - 10}q10 5 20 0q-5 10 0 20q-10-5-20 0q5-10 0-20z`} stroke="#b8b8b8" strokeWidth="2.500" fill="none" />;
}
const urban =
  "M70 130L100 110 150 150 240 45H400L470 150L560 100L640 45H770L860 190L880 110L1000 150L1060 110L1100 45H1260V440L1180 520L1060 640L1000 590L1000 500L930 480L880 560L960 660L940 700L850 740L830 820L900 900L960 1000L1040 1080L1040 1195H440V1000L500 960L540 830L460 770L380 740L350 700L260 700V560L200 540L260 400L200 280L140 210z";
const westPatches = [[285,525,60,40],[310,740,70,30],[290,350,60,60],[400,600,40,60],[470,660,60,50],[280,600,60,30]];
const white = [[570,140,60,50],[770,70,60,50],[880,130,80,60],[590,215,30,30],[830,250,30,60],[900,330,60,40],[640,700,30,30],[740,640,80,60],[800,640,50,100],[870,560,60,80],[930,560,40,60],[480,1080,70,60],[980,640,60,60],[990,790,50,60],[1000,900,50,90],[900,750,60,60],[395,740,55,40],[720,270,70,30],[880,1130,90,60],[300,270,60,40],[760,860,40,30],[520,600,40,30],[840,600,70,50],[640,950,20,40],[1075,100,30,50],[1180,90,40,50],[1075,220,30,40],[1190,330,40,50],[410,230,40,30],[480,350,50,25],[300,90,25,40],[600,880,40,30],[870,1000,30,60],[390,460,40,20],[1090,540,60,40],[690,1090,30,40],[1130,430,25,30]];
function CalgaryMap() {
  return (
    <Svg w={1164} h={384} vb="377 145 1164 384">
      <path fill="#fefefe" d="M377 145h1164v384H377z" />
      {/* west: forest, creeks, highways */}
      <g transform="translate(370 115) scale(.33333)" strokeLinejoin="round">
        <path fill="#e8f3dd" d="M20 805l80-5 40 70 40 40 30 20-40 10-5 40 40 30 20 60 60 10 20-50-10-40-60-70 60-30 90 50 90 40 30 60 70 20 20 80 50 20-20 80-40 55H20z" />
        <g fill="#eef6e6">
          <path d="M590 1120l110 20 80 20 50 60 20 20H590zM1085 1180l50 10 40 50h-80zM70 590l60-60 120-30 110 0-100 30-100 40zM370 510l60 20 50 30-60 10zM670 610l120 20 80 40-120-10-100-20zM1000 790l100 0 90 40v30l-90-20-100-30zM850 290l60 10v30l-50-10zM960 380l50-10 20 70-40 20zM1100 880l90 20v20l-80-20z" />
          <path d="M730 110l90 20-20 20-60-10zM920 170l40 0 10 40-40 20zM1020 560l30 10v80l-40-50zM640 1010l10 10-10 50-10-10zM210 310l30 0v20h-30zM280 370l20-5v30l-20 5zM860 590l60 0 80 50-40 10-60-20z" />
        </g>
        <g fill="#fefefe"><path d="M240 1030l80-20 50 60-20 70-60-10zM380 1060l50-10v50l-50 30zM190 930l40 5v15l-40 10zM340 1165h160v8h-160zM300 1190l60 10v20l-60 10zM440 1060h7v90h-7z" /></g>
        <g stroke="#a9d8d1" strokeWidth="3.300" fill="none">
          <path d="M152 127l50 43 20 45 20 20 25 20 35 15 5 45 15 30 30 20 60 25 40 10 50 10 50-5 20 50 10 42 20 12 30 20 20 22 40 25 30-3 40 22 50 10 40 15 45 45 25 20 12 18 40 5 40 40 30 10 20 30" />
          <path d="M330 210l40 20 20 35 20 20 8 40 18 30 8 35M482 210l10 40 25 45 10 30 12 45 8 35M20 325l40 15 22 40 35 25 40-2 35 0 15 15 40 15 20 15 30 5 25 22 25 25-35-2-45-6-55 8-40 14-50 4-30 25-30 6-40 38" />
          <path d="M20 540l20 15 30 15 30-10 40-15 50-15 50-10 50-8 40 5 30-7 30 8 30 20 30 15 40-5 40 5 30-10 40 15 30 15 50-5 40 12 50 2 40 8 40 10 40 12 30 20 30 12 20 6" />
          <path d="M355 510l20 15 20 20 25-5 30 10 30 10 20-5 40 5 30 12 10 40 30 2 40 0 40 0 40-10 40 15 30 10 40 5 30 20 40 35 30 30 30 20 10 35 40 10M390 530l-2 30-20 18-40 8-20 30 0 25-5 35M300 685l35-12 35 0 20 16 40-6 40-12 30 48M480 550l0 55-8 35-35 12-40-5-20-22" />
          <path d="M20 750l25-25 15-40 30-42 40-3 40 6 30 12 30 30 30 8 20 20-5 44-10 30 0 60-40 35-50 45-5 30 15 22 15 30-5 45-20 27-40-8-50 10-40 5-25 40M105 650l5 60 20 50 20 30 50 25M350 675l-20 20 30 50 25 35 20 45M80 620l30-20 50-5 30-22 40-18 50-10" />
          <path d="M185 985l25 5 20 30 10 35 20 25 10 40-10 15-28-5M255 985l10-35 15-20 60 20 30 35 40 20 45 25 10 10 30 5 30 25 25 5 10-10-5-30-13-40 5-30-5-28M490 825l15 45 15 35 15 35M325 860l20-12 35 18 40 20 30 22 30-5 30 20 20 20 18 6M470 1025l-40 15-20 55-60 18-50 10-15 30 10 88M430 930l10 20 25 25 5 30 12 25M560 1065l10 20-25 20 0 30-15 30-25 30-20 45" />
          <path d="M545 930l20 10 30 0 15-20 40-10 20-20 40-5 20-25 25-10 5-15 20-30 5-20-10-10 40 0 5-45 20-3 30 12 40-10 30-20 20 17 30 10M545 720l50 5 50 30 30 10 15-10 25-18 20 8 25 15 15 10M775 790l5 25 30 45 10 40 25 40-5 25-15 15-8 22M550 825l40 15 40 5 30 15 20 5M935 740l0 40 10 50-2 30 25 30 10 40 20 30 15 22 20 2M1090 890l20 10 40 0 45 10M580 1165l-5-30 10-25 15-5 30 10 30 18 30 5 20 2 10 20 30 8 50 2 20 10 40 5 20 10 40 40 50 5M1000 1040l-15 10-35 5 2 45-5 30 20 30 2 75M1090 1070l30 3 25 13 0 15-20 15 0 110" />
          <path d="M625 275l30 17 30 28-5 30-20 50 0 60 8 40 25 25 40 12 20 20 35 8 30 25 45 3M800 315l-12 20 2 60 8 30 5 90 5 30 15 45 20 15 30 40 30 25 20 5M605 105l15-12 20 20 20 30 30 20 50 8 20-30 20-15 10-12M905 115l0 35-20 5-5 60-10 50 10 30M1025 375l20 30 30 50 20 30 30 20 20 30 15 30 10 40 15 10-5 50-20 30 2 50 0 25" />
        </g>
        <path d="M805 90q50 25 90 20t100-10 120 30 100-5" stroke="#bfe8fd" strokeWidth="10" fill="none" />
        <path d="M865 95q80 0 120 0t100 8 120 15" stroke="#ddd6cc" strokeWidth="4" fill="none" />
        <g stroke="#bdbdbd" strokeWidth="3.500" fill="none">
          <path d="M35 90v570q0 40-15 60M35 661h560l50 20q20 8 100 8t130 20 140 0q60-40 90-38t90 30M545 255h290l18 20v185l205 165M853 305l60 10 120 40h160M990 562h210M1058 460v160M750 205v30l22 20" />
          <path d="M853 115v38h-50v102M840 257h218v510h142" strokeDasharray="12 9" stroke="#c6c6c6" />
        </g>
        <path d="M20 218h75q20 0 40-8t60-4h870l135 48" stroke="#9a9a9a" strokeWidth="8.500" fill="none" />
        <path d="M1065 200V150q15-50 40-60" stroke="#9a9a9a" strokeWidth="8" fill="none" />
        <g fill="#a8a8a8"><path d="M24 218l11-15 11 15-11 15zM742 206l10-13 10 13-10 13zM986 206l6-9 12 9-12 9zM1055 205l20-20 20 25-20 15z" /></g>
        <path id="sb" d="M325 330q40 50 110 58t150 20" />
        <path id="lc" d="M558 915q80-5 100-30t60-60" />
        <g fill="#6f9fc4" fontFamily="Liberation Serif, serif" fontStyle="italic" fontSize="29" letterSpacing="3.800">
          <text><textPath href="#sb">Springbank Creek</textPath></text>
          <text letterSpacing="6"><textPath href="#lc">Lott Creek</textPath></text>
        </g>
      </g>
      {/* city */}
      <g transform="translate(740 130) scale(.33333)">
        <path d={urban} fill="#ebe5d8" />
        <g fill="#fbfbf9">{white.map(([x, y, w, h]) => <path key={x + "," + y} d={`M${x} ${y}h${w}v${h * 0.6}l-${w * 0.3} ${h * 0.1}v${h * 0.3}h-${w * 0.7}z`} />)}</g>
        <g fill="#f4f0e6">{westPatches.map(([x, y, w, h]) => <path key={x + "," + y} d={`M${x} ${y}h${w}v${h}h-${w}z`} />)}</g>
        <g fill="#e1eed6">
          <path d="M400 45h200l-40 60-70 30-60-30zM175 230l70 60 60 50 130 90-20 10-120-60-110-90zM210 120l60-20-20 60-30 10zM260 800l100 20-30 60 20 40-90-50zM330 840l60-30 140 0-60 40zM590 700l50-60 20 20-70 80-40 50zM780 220l60 60 50 120-30 20-50-100zM920 740l80 20 40 100-40 20-50-60zM990 1010l20 60-40 30zM730 1090l40-30 20 40-30 60-30-10zM700 560l40-40 10 40z" />
        </g>
        <path fill="#eef6e6" d="M60 745l70 25 100 50 0 20-80-30-100-40zM20 880l70 30 100 50-10 10-110-40-50-20zM40 1000l70 20 130 10v20l-140-10-60-20zM90 1160l70 10 40 20H90z" />
        <g stroke="#bfe8fd" strokeWidth="11" fill="none" strokeLinejoin="round">
          <path d="M0 82l80 5 70 20 30 50 55 20 10 40-45 30 50 60 80 70 90 40 60 50 100 0 60-60 80-10 30 40 60 60 60 0 70 10 30 60 30 40-10 60-20 70-20 60-40 100 10 60-40 60 0 80 50 50 10 50 20 100" />
        </g>
        <path fill="#c8ebff" d="M335 850l20-12 20 25 60 20 60-20 35-48 5 70-20 20 25 40-15 15-60-15-80-30-50-30zM745 1165l10-8 10 20-5 20-15-2zM860 200l20-12-10 20z" />
        <g stroke="#a9d8d1" strokeWidth="3.300" fill="none">
          <path d="M620 50l40 50 60 50 40 60M610 250l45-55M180 140l60-20 30-40M0 740l40 3 30 20 50-8 25 25 40 15 20 25 25 15 5-25 20-20 30 15-5 35-20 20 60 30 8 30-12 35-26-6-30-15-40 20-50-20-30-30-60-20-50-20-50-2M560 800l-30-20 20-20 20 10 5-40 10-15 25-10 30-15 20-20 30 10-10-25-30-25 10-20M930 770l60 10 40 20 20 40 0 80M1000 985l12 30-5 40-25 40M1063 1010l60 15 70-5 30-25 37-15M105 410l30 20 40 30 20 20 50 10M70 560l5 60-3 60-22 30M0 1025l40 15-20 50 0 110M80 1040l20 20 10 50 45 20 0 65M40 455l20 40 15 60" />
        </g>
        <g stroke="#c9c2b8" strokeWidth="4" fill="none"><path d="M560 820l100 70 0 310M780 45l60 250 50 120 160 60M1260 445l-250 250M830 820l120 30 100 170M1060 1020l120 10 80 40M0 70l120 40 60 110 120 100 170 140 250 60" /></g>
        <g stroke="#bababa" strokeWidth="3" fill="none">
          <path d="M0 310h250M50 100v420M0 412h250M0 516h1260M155 310v350M358 460v260M460 310v870M563 100v1095M613 640v300M665 50v1145M704 50v580M743 90v120M300 211h580M250 162h90l60-30M380 259h200M410 613h160M390 571h140M660 769h180M560 922h280M650 669h200M763 560v260M860 211h400M971 100v460M1058 45v1150M1163 50v1145M1112 180v340M860 120h70M870 110l180-5 200 5M940 412h320M910 465h100l60-30M1180 676h80M960 718h300M900 922h360M450 973h110M1058 973h200M500 1051q60 0 130-25t140 10l60-20M1058 1126h202M400 1126h260M350 700l-130-50M0 625q60 20 110 45t180 40M850 870l60 50v130M720 630l-70 250M700 1180l15-60-30-30M800 1190l10-60-50-100" />
          <path d="M0 718h240M258 800h100v86h-100z" strokeDasharray="12 9" />
        </g>
        <g stroke="#9a9a9a" strokeWidth="8" fill="none" strokeLinejoin="round">
          <path d="M0 175l50 20 30 12 60 4 90 32 80 75h50l60-15 40-3 30 14h600M148 211q0 40 20 60l70 60q17 20 17 60v310q0 15 20 17h70l30 10 30 40h60l80 25 30 18q100 8 280 0M250 45l100 70 60 70 40 60 10 60v145l25 35-3 40-22 30v140M775 45q20 60 40 120l40 80 5 70 40 100 40 50 20 50q30 30 30 60l-10 80-30 60-30 35-60 0-30 50-10 90-20 80 10 90 20 40q0 50 20 70l130 30" />
        </g>
        <path d="M346 910l134 60-125 195z" fill="#fcc8e8" stroke="#8a8088" strokeWidth="2.500" />
        <g fontFamily="Liberation Sans, sans-serif" fill="#555">
          <text x="726" y="452" fontSize="34" letterSpacing="2" fill="#777">Calgary</text>
          <text transform="translate(766 55) rotate(72)" fontSize="26" letterSpacing="1" fontWeight="700" fill="#888">Deerfoot Trail</text>
          <text transform="translate(1047 655) rotate(-45)" fontSize="23" fill="#8a8378" stroke="#fff" strokeWidth="3" paintOrder="stroke">Canadian National Railway</text>
        </g>
      </g>
      {/* east */}
      <g transform="translate(1140 115) scale(.33333)">
        <path fill="#ebe5d8" d="M0 90h75v100l-10 60 10 120v110l-20 60-55 20zM528 370l50-5 25 40 0 90-20 60-45-20-10-70zM472 458h52v50l30 60-10 80-40 30-32 0zM600 650l30 20-20 40-20-10zM90 255h25v25h-25z" />
        <path fill="#fbfbf9" d="M0 300h20v40H0zM40 130h20v30H40zM20 400l20 10v30H20zM0 200l25 10v20H0zM490 480h15v50h-15zM490 570h20v50h-20z" />
        <path fill="#e6f2da" d="M168 1185l70-15 30 50 50 20H168zM268 885h36v80h-36z" />
        <path fill="#f7f6df" d="M270 358h30v20h-30z" />
        <g fill="#c8ebff"><path d="M640 310l30-15v50l-35-10zM575 460l30 10 20 60-10 110-30 60-35-5-10-25 20-60-5-90zM570 400l20-10-5 60-25 5zM245 895l15 8-10 25z" /></g>
        <g stroke="#c8ebff" strokeWidth="8" strokeDasharray="8 3" fill="none"><path d="M845 400l40-90M855 405l36-70M840 380l25-60M868 408l20-40M320 350l10-40M330 360l15-40M520 260l15-60M532 262l6-50M755 175l10-40M768 170l20-60M855 140l10-50M805 315l15-45M800 435l15-40M705 410l12 20M715 430l14-10M515 760l10 40M528 765l10 40M575 810l20-50M588 800l15-40M275 820l10-30M285 830l10-35M247 675l10-30M350 740l12-35M1140 590l10-50M1150 630l8-50M1170 700l30 15M750 575l20 10" /></g>
        <g stroke="#a9d8d1" strokeWidth="3.300" fill="none" strokeLinejoin="round">
          <path d="M490 90l30 25 2 40-5 30 12 10-10 50-10 20 8 15-18 20 5 60 0 30-5 20-20 20-10 25-25 20 0 30 15 12 20-2 25 5 18 20 5 20-25 20 0 30 12 30 5 40M600 380l15-12 25-5 10-20 20-15 5-30 25-25 8-25 60-20 45-12 2 20 35 28 10-12 10-50 10-40 10-20 35-15 15-25 30 12 20 18 35 12 45-2 30-12 30 30 40 20 10-20 18-15 2-20M810 90l-10 25-5 30-25 20-15 30-45 45M1040 145l-15 20-2 25 40 20 8 60-5 30 12 50 20 35 2 50 40 15 25 40 20 0 2 55M480 695l60-12M480 700l-15 20-10 50-35 25-15 20-5 50-20 30-20 12-95 4-25 15-30 50-25 25-55 0-50 10-30 10-30 25M560 695l80 20 60 60 70 20 25 40 15 30-5 30 0 45 30 40 20 20 0 80 20 10-10 40 35 60 0 50M805 850l2-40 18-30-2-60 25-12 12-10 30-5 40 8 50 0 5 25 0 20 25 45 40 20 50 5 0 105M950 600l10 18 20 12 20-25 40 2 20-8 40 25 40 20 20 50M0 1070q20-40 85-46" />
        </g>
        <g stroke="#c8c0b6" strokeWidth="5" fill="none"><path d="M470 90L260 295 60 490M1205 430l-180 110-25 40-60 0-60 40q-120 100-210 135t-110-15l-90-25q-35-10-50 20t-50 50h-50q-200-5-380-5M0 1105l80 45 110 0 190 95" /></g>
        <g stroke="#bcbcbc" strokeWidth="3.500" fill="none">
          <path d="M0 154h370M371 90v470M780 90v1155M1189 90v1150M0 562h470q60-100 120-104h30M0 720h120M0 968h1190M65 90v1100M167 560v630M472 480v280M0 1171l70 0 60 20M815 92l-35 65 12 0-8 30" />
          <path d="M168 90v318h200M168 714h203M371 580v184h204v102h105V764h50V570M620 459h160M371 970v252h-50v25" strokeDasharray="12 9" />
        </g>
        <g>{[[134, 152], [128, 355], [126, 565], [126, 718], [128, 965], [128, 1190], [1189, 558]].map(([x, y]) => <Interchange key={x + "," + y} x={x} y={y} />)}</g>
        <g stroke="#9a9a9a" strokeWidth="9" fill="none"><path d="M136 90q4 80-6 150t-4 240-2 300 2 270 3 195M95 358h450q30 0 45 20t16 40v60q10 40 25 60t40 24h530" /></g>
      </g>
      {/* route shields */}
      <g fontFamily="Liberation Sans, sans-serif" fontWeight="700" fontSize="9" textAnchor="middle">
        {[[445.500, 183.500], [1448.500, 303]].map(([x, y]) => (
          <g key={x}>
            <path d={`M${x - 10} ${y - 9}h20q1 10-3 14t-7 5q-3-1-7-5t-3-14z`} fill="#93a884" stroke="#b9c6ae" />
            <path d={`M${x} ${y - 8}l2 3 3-1v3l2 2-3 3h-8l-3-3 2-2v-3l3 1z`} fill="#fff" />
            <text x={x} y={y + 4} fill="#222">1</text>
          </g>
        ))}
        <path d="M568 329.500h18q1 10-3 14t-6 4q-2 0-6-4t-3-14z" fill="#fff" stroke="#93a884" strokeWidth="1.500" />
        <text x="577.500" y="342" fill="#222">8</text>
      </g>
      <g fontFamily="Liberation Sans, sans-serif" fontSize="11" fill="#333" stroke="#fff" strokeWidth="2" paintOrder="stroke">
        <text x="670" y="198" textLength="30">Artists</text>
        <text x="670" y="210" textLength="76">View Park West</text>
        <text x="646" y="236" fontStyle="italic" fill="#777" textLength="37">1292m˚</text>
        <text x="715" y="257" fill="#555" textLength="42">Heritage</text>
        <text x="715" y="271" fill="#555" textLength="34">Woods</text>
        <text x="1268" y="170" textLength="36">Conrich</text>
        <text x="1257" y="312" textLength="62">Chestermere</text>
        <text x="1339" y="329" textLength="49">High Point</text>
        <text x="1352" y="341" textLength="36">Estates</text>
        <text x="1203" y="498" textLength="42">Shepard</text>
        <text x="1056.500" y="238" fontSize="10.500" fontWeight="700" fill="#6e6e6e" textLength="115">16 Avenue Northeast</text>
        <text transform="translate(1048 508) rotate(18)" fontSize="10.500" fontWeight="700" fill="#6e6e6e" textLength="58">Deerfoot-Tr</text>
      </g>
      {/* traffic signals */}
      <g fill="#a93598" stroke="#2a1a2a" strokeWidth="2.700">
        <g transform="translate(740 130) scale(.33333)">{dots(CITY)}{downtown()}</g>
        <g transform="translate(1140 115) scale(.33333)">{dots(EAST)}</g>
      </g>
      <path d="M1513.500 520.500v-14h3v-3h6v3h11v14h-3v-2h-2v2h-4v-2h-2v2h-4v-2h-2v2zM1517 509.500h13M1517 512.500h13M1517 515.500h13" fill="#fff" stroke="#666" strokeWidth="1.200" />
    </Svg>
  );
}
const Sep = ({ cls = "" }) => <span className={"h-[15px] w-px bg-[#9a9a9a] " + cls} />;
function MapView() {
  return (
    <div>
      <div className="flex h-[22px] items-center pl-[6px]">
        <MapIcon /><span className="ml-[5px] w-[124px] pt-[3px] tracking-[-0.025em] text-[#222]">MapProjectSignals</span>
        <div className="flex h-[22px] w-[151px] items-center rounded-t-[3px] bg-[#007acd] pl-[6px] text-white">
          <MapIcon /><span className="ml-[5px] w-[108px] pt-[3px] tracking-[-0.025em]">MapProjectSignals</span><span className="mt-[2px]"><XIcon s={10} c="#d8ecf8" /></span>
        </div>
        <span className="ml-auto mr-[5px]"><Chev s={9} /></span>
      </div>
      <div className="border-x border-b border-[#cfd1d1] border-t-[3px] border-t-[#007acd] bg-[#f7f9f8]">
        <CalgaryMap />
        <div className="flex h-[23px] items-center text-[#444]">
          <div className="ml-[5px] flex h-[22px] w-[100px] items-center justify-between border border-[#868686] bg-white pl-[6px] pr-[4px] pt-px text-[12px] tracking-[-0.065em]">
            1:286,870<Svg w={5} h={4}><path fill="#444" d="M0 0h5L2.500 4z" /></Svg>
          </div>
          <Sep cls="ml-[4px]" />
          <span className="ml-[5px] flex size-[20px] items-center justify-center bg-[#9fd3f3]"><Svg><path stroke={G} d="M.5.5h10v10H.5zM5.500.5v10M.5 5.500h10" /><path stroke="#9fd3f3" strokeWidth="4" d="M12 6v10M7 12h9" /><path stroke="#555" strokeWidth="1.300" d="M12 8v8M8 12h8" /></Svg></span>
          <Svg w={14} className="ml-[5px]"><path stroke="#999" d="M.5.5h13v13H.5zM.5 3.500h13M.5 7h13M.5 10.500h13M3.500.5v13M7 .5v13M10.500.5v13" /></Svg>
          <Svg w={18} h={16} className="ml-[7px]"><path stroke="#666" d="M1 2h5M3 1v4M14 0v5M12 2.500h5M12 9h4v3h-4z" /><path stroke="#3b93d0" strokeWidth="1.500" strokeDasharray="3 2" d="M2 10l6-5 8 2M6 13h8" /><path fill="#3f8f4a" d="M0 13h3v3H0z" /></Svg>
          <Svg w={16} className="ml-[4px]"><path fill="#ddeedb" d="M0 0h7v7H0z" /><path stroke="#555" strokeDasharray="2 1.500" d="M0 8.500h16M8.500 2v14" /><circle cx="8.500" cy="8.500" r="1.500" fill="#555" /></Svg>
          <Svg w={17} h={18} className="ml-[5px]"><path stroke="#2f8fd0" strokeWidth="2" d="M1 12V4l4 8V4" /><path stroke="#777" d="M8.500 0v18M9 17l7-9" /><path stroke="#2f8fd0" strokeWidth="1.500" d="M10 2q4 0 3 5M11 5l2 3 3-3" /></Svg>
          <Sep cls="ml-[7px]" />
          <span className="ml-[276px] w-[169px] whitespace-nowrap pt-[2px] text-[12px] tracking-[-0.05em]">12,718,594.25W 6,610,833.35N m</span>
          <span className="ml-[10px]"><Chev s={10} w={2} /></span>
          <div className="ml-auto flex items-center pr-[5px]">
            <Sep />
            <span className="ml-[6px] flex h-[20px] w-[128px] items-center gap-[3px] bg-[#fafbfb] text-[#999]"><Svg><path d="M7 .5h8.500v8H12M9 1l3 3 3-3M12 4v3" stroke="#aaa" /><circle cx="5.500" cy="8.500" r="4" stroke="#9cc6e2" strokeWidth="1.300" /><path d="M3.500 8.500h4M5.500 6.500v4" stroke="#9cc6e2" /><path d="M9 12l3 4" stroke="#d9b48e" strokeWidth="2" /></Svg>Selected Features: 0</span>
            <Sep cls="ml-[2px]" />
            <span className="ml-[8px] flex gap-[3px]"><i className="h-[14px] w-[4px] bg-[#666]" /><i className="h-[14px] w-[4px] bg-[#666]" /></span>
            <Sep cls="ml-[9px] mr-[6px]" />
            <Refresh />
          </div>
        </div>
      </div>
    </div>
  );
}

/* ---------- attribute table ---------- */
const cols = ["OBJECTID *", "unitid", "mistno", "date_instd", "time_instd", "firstroad", "secondroad", "quadrant", "int_type", "pedbutton"];
const rows = [
  ["1109001301", "0131", "1/1/1970", " 32 AVENUE", "CENTRE STREET", "N", "Traffic signal", "Yes"],
  ["1109000975", "0388", "10/2/2012", "  7 AVENUE", " 11 STREET", "SW", "Traffic signal", "No"],
  ["1110058815", "B2895", "9/13/2017", "BOWNESS ROAD", " 66 STREET", "NW", "Pedestrian RRFB", "Yes"],
  ["1109001207", "0935", "7/31/2002", " 96 AVENUE", "HARVEST HILLS BOULE...", "N", "Traffic signal", "Yes"],
  ["1110203120", "B0005", "1/24/2020", "ELBOW DRIVE", "CANATA CLOSE", "SW", "Overhead Flasher", "Yes"],
  ["1109759176", "1181", "2/24/2021", " 13 AVENUE", "  1 STREET", "SW", "Traffic signal", "Yes"],
  ["1109000557", "0066", "11/19/1990", "NOSE HILL DRIVE", "SCENIC ACRES BOULEV...", "NW", "Traffic signal T interse...", "Yes"],
  ["1109000627", "0013", "10/23/1995", "COUNTRY HILLS BOUL...", "SARCEE TRAIL", "NW", "Traffic signal", "Yes"],
  ["1109980149", "0800", "5/12/2016", "194 AVENUE", "CHAPARRAL BV/WALD...", "SE", "Traffic signal", "Yes"],
  ["1109001307", "B2519", "8/1/1976", "CENTRE STREET", "TACHE AVENUE", "N", "Overhead Flasher", "Yes"],
  ["1109000650", "0121", "1/1/1978", " 40 AVENUE", " 49 STREET", "NW", "Traffic signal", "Yes"],
  ["1110334655", "1257", "8/24/2022", "MCKENZIE LAKE BOULE...", "MCKENZIE LAKE DR/M...", "SE", "Traffic signal", "Yes"],
];
const gridCols = "grid-cols-[23px_67px_134px_135px_65px_134px_135px_134px_135px_134px_47px]";
const thick = [2, 5, 7];
const tIcon = (extra, c = G, b = "#6bb2e4") => (
  <Svg><path fill="#fafafa" d="M0 2h16v10H0z" /><path stroke={c} strokeWidth=".9" d="M.5 2.500h15v9H.5zM.5 6h15M.5 9h15M5.500 2v10M10.500 2v10" /><path fill={b} d="M0 1h16v3H0z" />{extra}</Svg>
);
function Tool({ icon, t, gray, cls = "" }) {
  return <span className={"flex items-center gap-[4px] whitespace-nowrap " + cls + (gray ? " text-[#bfc1c3]" : "")}>{icon}{t}</span>;
}
function Table() {
  return (
    <div className="mt-[7px]">
      <div className="flex h-[22px] items-center">
        <div className="flex h-[22px] w-[216px] items-center rounded-t-[3px] bg-[#d3d4d9] pl-[6px] pt-[3px] text-[#444]">
          <Svg w={17}><path stroke={G} fill="#fff" d="M.5 1.500h9v8h-9zM.5 4h9M.5 7h9M3.500 2v8M6.500 2v8" /><path fill="#55a6dc" d="M0 0h10v3H0z" /><path fill="#fff" stroke={G} d="M7.500 8v6q4.500 3 8 0V8" /><ellipse cx="11.500" cy="8.500" rx="4" ry="1.800" fill="#fff" stroke={G} /></Svg>
          <span className="ml-[4px] w-[172px]">SDEDemo01.DBO.TrafficSignals</span><XIcon s={10} c="#777" />
        </div>
        <span className="ml-auto mr-[5px]"><Chev s={9} /></span>
      </div>
      <div className="h-[411px] border border-[#cfd1d1] border-t-[3px] border-t-[#d3d4d9] bg-[#f7f9f8] p-px pt-0">
        <div className="mt-px flex h-[30px] w-[1162px] items-center border border-[#bcbfc3] bg-[#eef0f2] text-[#444]">
          <b className="ml-[5px] w-[37px] font-semibold">Field:</b>
          <Tool cls="w-[51px]" icon={tIcon(<path stroke="#444" strokeWidth="1.600" d="M4.500 9v7M1 12.500h7" />)} t="Add" />
          <Tool cls="w-[77px]" icon={tIcon(<><path fill="#eef0f2" d="M6 9h8v7H6z" /><path stroke="#444" strokeWidth="1.500" d="M6 11h8M8 14.500h4" /></>)} t="Calculate" />
          <span className="h-[24px] w-px bg-[#c3c6c9]" />
          <b className="ml-[8px] w-[63px] font-semibold">Selection:</b>
          <Tool cls="w-[131px]" icon={<Svg><path stroke={G} fill="#fff" d="M.5.5h9v9h-9zM4 1q0 3 3 4l2 0" /><path stroke={G} fill="#fff" d="M5.500 6h10v9.500h-10zM5.500 9h10M5.500 12h10M9 8v7M12 8v7" /><path fill="#55a6dc" d="M5 5h11v3H5z" /></Svg>} t="Select By Attributes" />
          <Tool cls="w-[64px]" icon={<Svg><path fill="#777" d="M0 0h11v2H0zM5 7h11v2H5z" /><path stroke={G} d="M.5 1v6H11M.5 4h10M5.500 8v7.500h10V8M6 12.500h9" /><path stroke="#555" strokeWidth="1.500" d="M13 2v4M11 4l2 2 2-2M2 15v-5M0 12l2-2 2 2" /></Svg>} t="Switch" />
          <Tool gray cls="w-[56px]" icon={<Svg><path stroke="#c4c6c8" d="M.5 1.500h14v13H.5zM.5 4.500h14M.5 7.500h14M.5 11h14" /></Svg>} t="Clear" />
          <Tool gray cls="w-[62px]" icon={<Svg><path stroke="#c4c6c8" d="M.5 1.500h14v10H.5zM.5 4.500h14" /><path fill="#cfe3ef" d="M1 8h13v3H1z" /><path stroke="#e5b3a8" strokeWidth="2" d="M2 10l5 5M7 10l-5 5" /></Svg>} t="Delete" />
          <Tool gray icon={<Svg><path stroke="#b8bcc0" d="M4 1.500h11.500V9H12M.5 6.500h11v8H.5zM.5 10h11" /><path fill="#cfe3ef" d="M4 2h11v2H4zM1 7h10v3H1z" /></Svg>} t="Copy" />
          <Svg w={14} h={14} className="ml-auto mr-[7px]"><path d="M1 2h12M1 7h12M1 12h12" stroke="#5c5c5c" strokeWidth="2.600" strokeLinecap="round" /></Svg>
        </div>
        <div className="mt-px h-[347px] w-[1162px] border border-[#bcbfc3] bg-[#eaeaea]">
          <div className="flex h-[329px]">
            <div className="w-[1143px] overflow-hidden text-[11px] tracking-[-0.035em] text-[#444]">
              <div className={"grid h-[25px] border-b border-[#c4c4c4] font-semibold " + gridCols}>
                <span className="flex items-end justify-end border-r border-[#c4c4c4] bg-white p-[3px]"><Svg w={10}><path d="M10 0v10H0z" fill="#cacaca" /></Svg></span>
                {cols.map((c, i) => (
                  <span key={c} className={"overflow-hidden whitespace-nowrap pl-[4px] leading-[25px] " + (i === 0 ? "border-b-2 border-[#007acd] bg-[#c8e2f5] shadow-[1px_0_0_#c4c4c4]" : thick.includes(i) ? "border-r-2 border-[#c6c6c6]" : i < 9 ? "border-r border-[#c4c4c4]" : "")}>{c}</span>
                ))}
              </div>
              {rows.map((r, n) => {
                const cells = [n + 1, r[0], r[1], r[2], "00:00:00.000", r[3], r[4], r[5], r[6], r[7]];
                return (
                  <div key={n} className={"grid h-[25px] border-b border-[#c4c4c4] leading-[22px] " + gridCols + (n % 2 ? " bg-[#eaeaea]" : " bg-white")}>
                    <span className={"pl-[4px] " + (n ? "border-r border-[#c4c4c4] bg-[#eaeaea]" : "border-r-2 border-[#007acd] bg-[#c8e2f5]")}>{n + 1}</span>
                    {cells.map((c, i) => (
                      <span key={i} className={"overflow-hidden whitespace-pre pl-[4px] " + (i === 0 && n === 0 ? "bg-[#c8e2f5] " : n === 2 && i === 4 ? "bg-[#f5f5f5] " : "") + (i === 5 || i === 6 ? "tracking-[-0.01em] " : i === 8 ? "tracking-[-0.012em] " : "") + (thick.includes(i) ? "border-r-2 border-[#c6c6c6]" : i < 9 ? "border-r border-[#c4c4c4]" : "")}>{c}</span>
                    ))}
                  </div>
                );
              })}
              <div className={"grid h-[4px] bg-white " + gridCols}>
                <span className="border-r border-[#c4c4c4] bg-[#eaeaea]" />
                {cols.map((c, i) => <span key={c} className={thick.includes(i) ? "border-r-2 border-[#c6c6c6]" : i < 9 ? "border-r border-[#c4c4c4]" : ""} />)}
              </div>
            </div>
            <div className="flex w-[17px] flex-col items-center pt-[5px]">
              <Chev s={8} r="rotate-180" /><span className="mt-[6px] h-[22px] w-[9px] rounded-full bg-[#b3b3b3]" /><span className="mb-[4px] mt-auto"><Chev s={8} /></span>
            </div>
          </div>
          <div className="flex h-[16px] items-center pl-[5px] pr-[22px]">
            <Chev s={8} r="rotate-90" /><span className="ml-[4px] h-[9px] w-[574px] rounded-full bg-[#b3b3b3]" /><span className="ml-auto"><Chev s={8} r="-rotate-90" /></span>
          </div>
        </div>
        <div className="flex h-[27px] items-center text-[#444]">
          <span className="mt-[3px] flex h-[22px] w-[32px] items-center justify-center border border-[#3aa6ea] bg-[#c3c4c9]"><Svg w={15} h={13}><path fill="#fff" stroke="#666" d="M.5.5h14v12H.5z" /><path fill="#bfe4f5" d="M1 4h13v2H1zM1 9h13v3H1z" /><path stroke="#666" d="M0 3.500h15M0 6.500h15M0 9.500h15" /></Svg></span>
          <Svg w={15} h={11} className="-mt-[3px] ml-[11px]"><path fill="#bcdcec" stroke="#666" strokeWidth="1.200" d="M.6.6h13.800v9.800H.6zM0 4h15M0 7h15" /></Svg>
          <Svg w={9} h={10} className="ml-[17px] mt-px"><path fill="#bdbfbf" d="M0 0h1.200v10H0zM9 0v10L2 5z" /></Svg>
          <Svg w={9} h={10} className="ml-[14px] mt-px"><path fill="#555" d="M7.800 0H9v10H7.800zM0 0v10l7-5z" /></Svg>
          <span className="ml-[12px] pt-[3px]">0 of 1,634 selected</span>
          <div className="ml-auto flex items-center pt-[2px]">
            <Sep />
            <Svg w={9} h={16} className="ml-[6px]"><path stroke="#a9c9a4" strokeWidth="1.700" d="M4.500 2v6M1 5l3.500-3.500L8 5" /><path stroke="#ecc392" strokeWidth="1.700" d="M4.500 8v6M1 11l3.500 3.500L8 11" /></Svg>
            <i className="ml-[15px] h-[2px] w-[6px] bg-[#555]" />
            <span className="ml-[8px] flex items-center"><i className="h-[3px] w-[48px] bg-[#a6a6a6]" /><i className="h-[14px] w-[3px] bg-[#777]" /><i className="h-[3px] w-[49px] bg-[#dcdcdc]" /></span>
            <Svg w={8} className="ml-[7px]"><path d="M4 0v8M0 4h8" stroke="#555" strokeWidth="1.800" /></Svg>
            <span className="ml-[7px] flex h-[22px] w-[60px] items-center justify-between bg-white pl-[6px] pr-[5px] tracking-[-0.06em] text-[#222]">100%<Svg w={5} h={4}><path fill="#444" d="M0 0h5L2.500 4z" /></Svg></span>
            <Sep cls="ml-[5px] mr-[7px]" />
            <span className="mr-[5px]"><Refresh /></span>
          </div>
        </div>
      </div>
    </div>
  );
}

/* ---------- catalog pane ---------- */
const Folder = ({ children }) => (
  <Svg><path fill="#dcc653" d="M0 3V1.500h1L2 .5h5l1 1h7V13H0z" /><path stroke="#fbf3c4" d="M1 3.500h13" />{children}</Svg>
);
const tree = [
  [0, "c", <Folder><path fill="#9bc49f" stroke={G} d="M3.500 5.500h9v9h-9z" /><path fill="#cfeafc" d="M9 6h3v5l-4 3z" /></Folder>, "Maps"],
  [0, "c", <Folder><path fill="#c94f2f" d="M3 6.500h10v8H3z" /><path stroke="#fff" d="M3 10.500h10" /><path stroke="#8a3420" d="M6 6V4.500h4V6" /></Folder>, "Toolboxes"],
  [0, "o", <Folder><path fill="#f7f9f8" d="M2 5h12v10H2z" /><path fill="#fff" stroke={G} d="M3.500 7v6.500q4.500 2 9 0V7" /><ellipse cx="8" cy="7" rx="4.500" ry="2" fill="#fff" stroke={G} /></Folder>, "Databases"],
  [1, "c", <Svg><path stroke={G} d="M.5 2.500v9q2 2 5 2M11.500 2.500V7" /><ellipse cx="6" cy="2.500" rx="5.500" ry="2" stroke={G} /><path fill="#e8ddd0" stroke={G} d="M7.500 15.500v-5l3.500-3.500 4 3.500v5zM10.500 15v-3h2v3" /></Svg>, "JustinCityCalgaryProjectA.gdb"],
  [1, "o", <Svg><path stroke={G} d="M.5 2.500v7q5.500 3.500 11 0v-7" /><ellipse cx="6" cy="2.500" rx="5.500" ry="2" stroke={G} /><path stroke={G} strokeWidth="1.600" d="M6 11v4M0 15h12" /></Svg>, "DESKTOP-79H0TA9-SQLExpress.sde"],
  [2, "", <FC />, "SDEDemo01.DBO.country"],
  [2, "", <FC />, "SDEDemo01.DBO.Projects"],
  [2, "s", <Svg><rect x=".5" y="1.500" width="15" height="12" rx="1.500" fill="#fff" stroke={G} /><path fill="#555" d="M4 4h1.500v1.500H4zM7 8h1.500v1.500H7zM11 5h1.500v1.500H11zM11 9h1.500v1.500H11z" /></Svg>, "SDEDemo01.DBO.TrafficSignals"],
  [0, "c", <Folder><path fill="#f7f9f8" d="M2 5h12v10H2z" /><ellipse cx="8" cy="9" rx="5.500" ry="4" fill="#fff" stroke={G} /><path stroke={G} strokeWidth="1.500" d="M5 8h1M8 7h1M10 12l5-6" /></Folder>, "Styles"],
  [0, "c", <Folder><path fill="#fff" stroke={G} d="M5.500 3.500h7v11h-7zM7 6.500h4M7 8.500h4M7 10.500h4" /></Folder>, "Servers"],
  [0, "c", <Folder><path fill="#f7f9f8" d="M6 7h8v8H6z" opacity=".5" /><path fill="#555" d="M7 6.500v8l5-4z" /></Folder>, "Folders"],
  [0, "c", <Folder><path fill="#c94f2f" d="M1 10l5-5 5 5zM7 5h3v3z" /><path fill="#fff" stroke="#555" d="M3 10.500h7v4H3z" /><path fill="#55a6dc" d="M5.500 12h2v3h-2z" /></Folder>, "Locators"],
];
function FC() {
  return <Svg><rect x=".5" y="1.500" width="15" height="12" rx="1.500" fill="#fff" stroke={G} /><path fill="#ddd" stroke={G} d="M3.500 3.500h9v8h-9zM4 11l3-4 2 2 3-5" /></Svg>;
}
function Catalog() {
  return (
    <div className="ml-[6px] flex h-[881px] w-[329px] shrink-0 flex-col overflow-hidden">
      <div className="flex h-[854px] flex-col rounded-tl-[4px] border-l border-t border-[#cfd1d1] bg-[#f7f9f8]">
        <div className="flex h-[31px] items-center pl-[6px] text-[15.5px] tracking-[-0.045em] text-[#222]">
          <span className="flex-1 tracking-[-0.03em]">Catalog</span><Chev s={9} /><span className="ml-[9px] mr-[2px]"><Pin /></span>
        </div>
        <div className="flex h-[23px] gap-[10px] pl-[6px] text-[13px] leading-[19px] tracking-[-0.04em] text-[#444]">
          <span className="h-[22px] w-[42px] border-b-2 border-[#007ac2] font-semibold tracking-[-0.05em]">Project</span><span className="w-[34px]">Portal</span><span>Favorites</span>
        </div>
        <div className="mt-[7px] flex h-[24px] items-center pl-[5px]">
          <Svg w={18}><circle cx="9" cy="9" r="8.300" stroke="#c2c4c4" strokeWidth="1.300" /><path d="M14 9H5M9 5L5 9l4 4" stroke="#c2c4c4" strokeWidth="1.500" /></Svg>
          <span className="ml-[5px] flex h-[24px] w-[20px] items-center justify-center border border-[#bdbfbf]"><Svg w={12}><path d="M1 6l5-5 5 5M2.500 6v5.500h7V6M5 11V8h2v3" stroke="#bbb" /></Svg></span>
          <span className="-ml-px flex h-[24px] w-[290px] items-center border border-[#868686] bg-white pl-[5px] pt-px italic text-[#555]"><span className="w-[257px] tracking-[-0.025em]">Search Project</span><Mag s={12} /></span>
        </div>
        <div className="mt-[7px] text-[#444]">
          {tree.map(([lv, st, icon, t]) => (
            <div key={t} className={"flex h-6 items-center whitespace-nowrap " + (st === "s" ? "ml-[53px] border border-[#919393] bg-[#c9c9c9] pl-[4px]" : lv === 0 ? "pl-[12px]" : lv === 1 ? "pl-[28px]" : "pl-[58px]")}>
              {lv < 2 && <span className="mr-[8px] flex w-[6px] justify-center">{st === "o" ? <Exp /> : <Svg w={5} h={8}><path d="M.5.5v7L4.500 4z" stroke="#a0a0a0" /></Svg>}</span>}
              {icon}<span className={t.startsWith("Justin") ? "ml-[7px] tracking-[-0.01em]" : lv === 1 ? "ml-[7px]" : "ml-[8px]"}>{t}</span>
            </div>
          ))}
        </div>
      </div>
      <div className="flex h-[21px]">
        <span className="h-[21px] w-[51px] rounded-b-[4px] border-x border-b border-[#cfd1d1] bg-[#f7f9f8] pl-[5px] leading-[21px] text-[#007ac2]">Catalog</span>
        <span className="flex-1 border-t border-[#cfd1d1] pl-[8px] leading-[20px] tracking-[-0.025em] text-[#444]">Symbology</span>
      </div>
    </div>
  );
}

export default function App() {
  return (
    <div className="flex h-[1001px] w-[1877px] flex-col overflow-hidden bg-[#eaeaea] font-['Open_Sans','Noto_Sans',sans-serif] text-[12px] tracking-[-0.035em] text-[#222]">
      <Ribbon />
      <div className="flex pt-[6px]">
        <Contents />
        <div className="ml-[6px] w-[1166px] shrink-0"><MapView /><Table /></div>
        <Catalog />
      </div>
    </div>
  );
}
